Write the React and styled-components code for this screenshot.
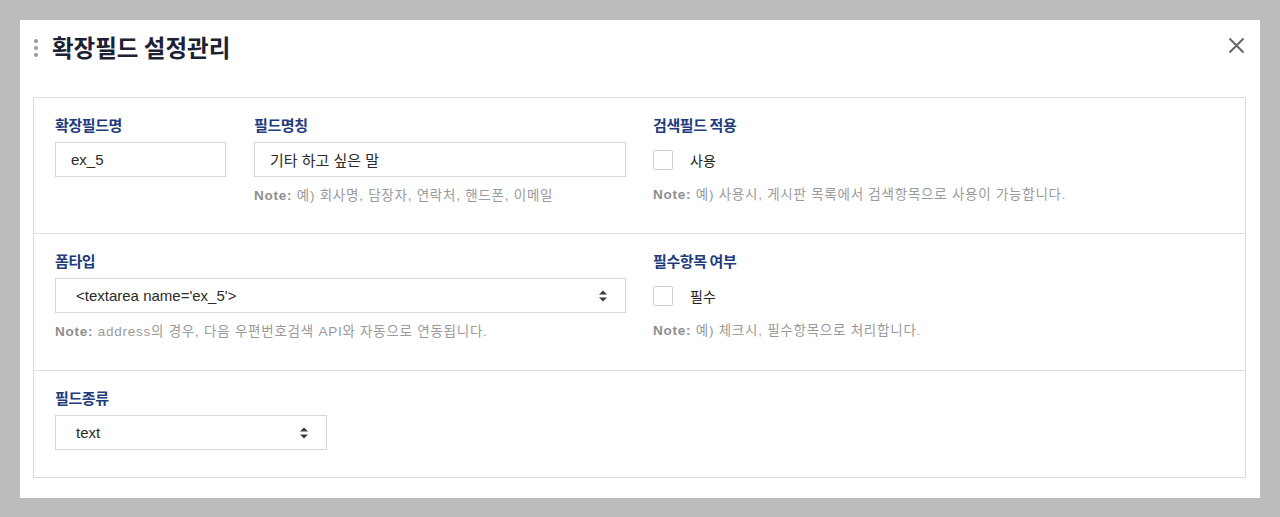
import React from "react";
import styled, { createGlobalStyle } from "styled-components";

const GlobalStyle = createGlobalStyle`
  html, body {
    margin: 0;
    padding: 0;
    background: #bcbcbc;
  }
  body {
    font-family: "Liberation Sans", "Noto Sans CJK KR", sans-serif;
  }
`;

const Page = styled.div`
  padding: 20px;
`;

const Panel = styled.div`
  background: #fff;
  padding: 12px 14px 20px 13px;
`;

const Header = styled.div`
  display: flex;
  align-items: center;
  height: 30px;
  margin-bottom: 35px;
`;

const Dots = styled.div`
  display: flex;
  flex-direction: column;
  gap: 3px;
  margin: 2px 14px 0 1px;
  span {
    width: 4px;
    height: 4px;
    border-radius: 50%;
    background: #9a9a9a;
  }
`;

const Title = styled.h1`
  margin: 0;
  font-family: "Noto Sans CJK KR", sans-serif;
  font-size: 23.5px;
  font-weight: 700;
  color: #1c2233;
  letter-spacing: 0;
  flex: 1;
`;

const Close = styled.button`
  border: none;
  background: none;
  padding: 0;
  margin-right: 1px;
  margin-top: -3px;
  width: 17px;
  height: 17px;
  cursor: pointer;
  display: flex;
`;

const Box = styled.div`
  border: 1px solid #dcdcdc;
`;

const Row = styled.div`
  display: grid;
  grid-template-columns: 571px 1fr;
  column-gap: 27px;
  padding: 17px 21px ${(p) => p.$bottom || 29}px;
  border-top: ${(p) => (p.$first ? "none" : "1px solid #e2e2e2")};
`;

const Split = styled.div`
  display: grid;
  grid-template-columns: 171px 1fr;
  column-gap: 28px;
`;

const Field = styled.div`
  display: flex;
  flex-direction: column;
`;

const Label = styled.label`
  font-family: "Noto Sans CJK KR", sans-serif;
  font-size: 15px;
  font-weight: 700;
  line-height: 19px;
  color: #223a7c;
  margin-bottom: 8px;
  letter-spacing: -0.4px;
`;

const Input = styled.div`
  box-sizing: border-box;
  height: 35px;
  width: ${(p) => p.$width || "100%"};
  border: 1px solid #d6d6d6;
  padding: 0 ${(p) => (p.$select ? "17px 0 20px" : "15px")};
  display: flex;
  align-items: center;
  justify-content: space-between;
  font-size: 15px;
  color: #2a2a2a;
  background: #fff;
`;

const Note = styled.div`
  margin-top: 10px;
  font-size: 13.5px;
  line-height: 17px;
  letter-spacing: 0.75px;
  color: #9a9a9a;
  b {
    font-weight: 700;
    color: #8e8e8e;
  }
`;

const CheckRow = styled.div`
  display: flex;
  align-items: center;
  gap: 17px;
  margin-top: 7px;
  height: 22px;
  font-size: 14px;
  color: #222;
`;

const Check = styled.span`
  box-sizing: border-box;
  width: 20px;
  height: 20px;
  border: 1px solid #cfcfcf;
  border-radius: 2px;
  background: #fff;
`;

const CheckNote = styled(Note)`
  margin-top: 15px;
`;

const Arrows = () => (
  <svg width="10" height="14" viewBox="0 0 10 14">
    <path d="M1 5.5 L5 1.5 L9 5.5 Z" fill="#3a3a3a" />
    <path d="M1 8.5 L5 12.5 L9 8.5 Z" fill="#3a3a3a" />
  </svg>
);

const App = () => (
  <>
    <GlobalStyle />
    <Page>
      <Panel>
        <Header>
          <Dots>
            <span />
            <span />
            <span />
          </Dots>
          <Title>확장필드 설정관리</Title>
          <Close aria-label="close">
            <svg width="17" height="17" viewBox="0 0 17 17">
              <path d="M1.5 1.5 L15.5 15.5 M15.5 1.5 L1.5 15.5" stroke="#666" strokeWidth="2" />
            </svg>
          </Close>
        </Header>
        <Box>
          <Row $first>
            <div>
              <Split>
                <Field>
                  <Label>확장필드명</Label>
                  <Input>ex_5</Input>
                </Field>
                <Field>
                  <Label>필드명칭</Label>
                  <Input>기타 하고 싶은 말</Input>
                  <Note>
                    <b>Note:</b> 예) 회사명, 담장자, 연락처, 핸드폰, 이메일
                  </Note>
                </Field>
              </Split>
            </div>
            <Field>
              <Label>검색필드 적용</Label>
              <CheckRow>
                <Check />
                사용
              </CheckRow>
              <CheckNote>
                <b>Note:</b> 예) 사용시, 게시판 목록에서 검색항목으로 사용이 가능합니다.
              </CheckNote>
            </Field>
          </Row>
          <Row $bottom={30}>
            <Field>
              <Label>폼타입</Label>
              <Input $select>
                <span>&lt;textarea name='ex_5'&gt;</span>
                <Arrows />
              </Input>
              <Note>
                <b>Note:</b> address의 경우, 다음 우편번호검색 API와 자동으로 연동됩니다.
              </Note>
            </Field>
            <Field>
              <Label>필수항목 여부</Label>
              <CheckRow>
                <Check />
                필수
              </CheckRow>
              <CheckNote>
                <b>Note:</b> 예) 체크시, 필수항목으로 처리합니다.
              </CheckNote>
            </Field>
          </Row>
          <Row $bottom={27}>
            <Field>
              <Label>필드종류</Label>
              <Input $select $width="272px">
                <span>text</span>
                <Arrows />
              </Input>
            </Field>
          </Row>
        </Box>
      </Panel>
    </Page>
  </>
);

export default App;
